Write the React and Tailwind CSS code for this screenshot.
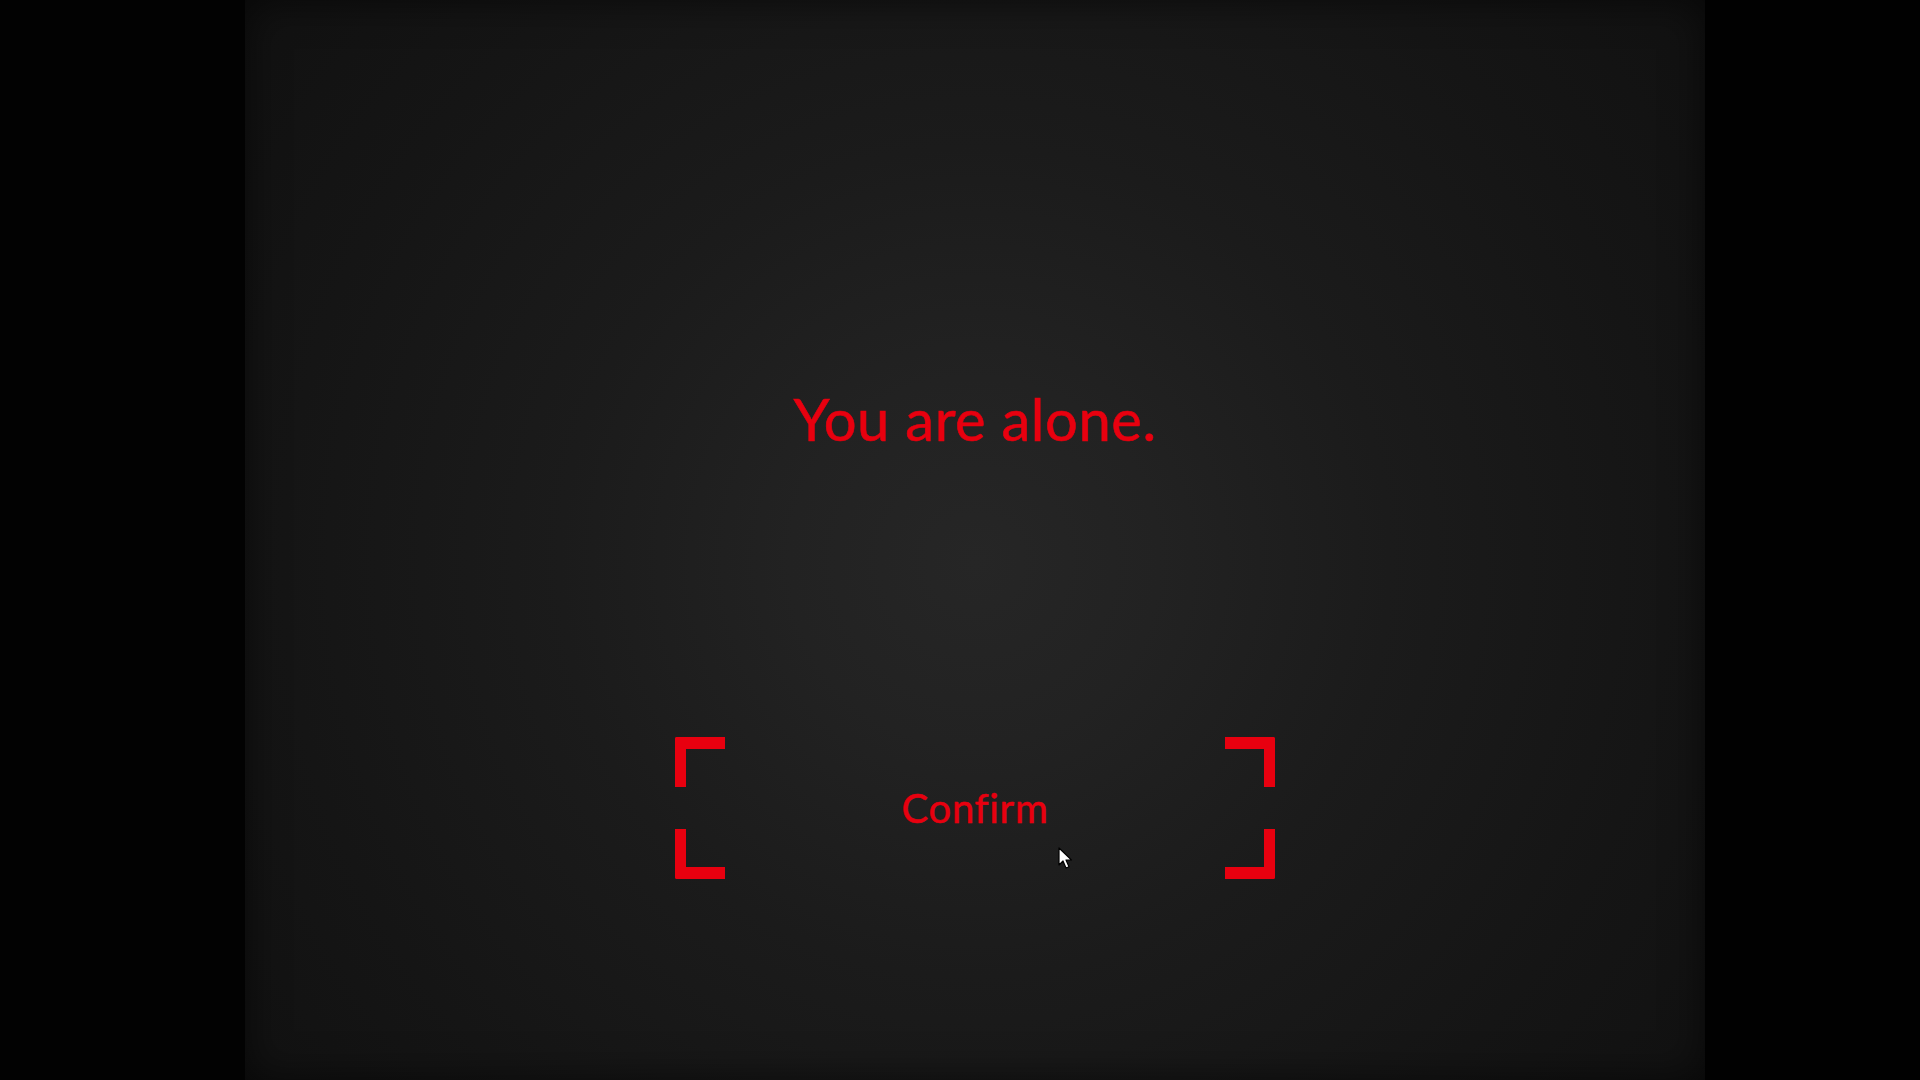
import React from "react";

const Corner = ({ className }) => (
  <div className={`absolute w-[50px] h-[50px] border-[#e8000f] ${className}`} />
);

const Cursor = () => (
  <svg
    className="absolute left-[1058px] top-[847px]"
    width="16"
    height="24"
    viewBox="0 0 16 24"
  >
    <path
      d="M1 1 L1 18 L5 14 L8 21 L11 19.8 L8 13 L13.5 13 Z"
      fill="#ffffff"
      stroke="#000000"
      strokeWidth="1.2"
      strokeLinejoin="round"
    />
  </svg>
);

export default function App() {
  return (
    <div className="relative flex w-full h-screen overflow-hidden bg-black font-['Lato','Liberation_Sans',sans-serif]">
      <div className="w-[245px] shrink-0 bg-[#020202]" />
      <div className="flex flex-col items-center w-[1460px] shrink-0 h-full pt-[390px] bg-[radial-gradient(circle_at_50%_52%,#262626_0%,#222222_20%,#1b1b1b_45%,#151515_75%,#111111_100%)] shadow-[inset_0_0_40px_rgba(0,0,0,0.6)]">
        <h1 className="text-[58px] leading-none font-normal text-[#e8000f] tracking-[0.5px] [-webkit-text-stroke:0.6px_#e8000f]">
          You are alone.
        </h1>
        <button className="relative mt-[289px] w-[600px] h-[142px] flex items-center justify-center">
          <Corner className="left-0 top-0 border-l-[11px] border-t-[12px] rounded-tl-[2px]" />
          <Corner className="right-0 top-0 border-r-[11px] border-t-[12px] rounded-tr-[2px]" />
          <Corner className="left-0 bottom-0 border-l-[11px] border-b-[12px] rounded-bl-[2px]" />
          <Corner className="right-0 bottom-0 border-r-[11px] border-b-[12px] rounded-br-[2px]" />
          <span className="text-[40px] leading-none font-normal text-[#e8000f] tracking-[0.7px] [-webkit-text-stroke:0.5px_#e8000f]">Confirm</span>
        </button>
      </div>
      <div className="flex-1 bg-[#010101]" />
      <Cursor />
    </div>
  );
}
